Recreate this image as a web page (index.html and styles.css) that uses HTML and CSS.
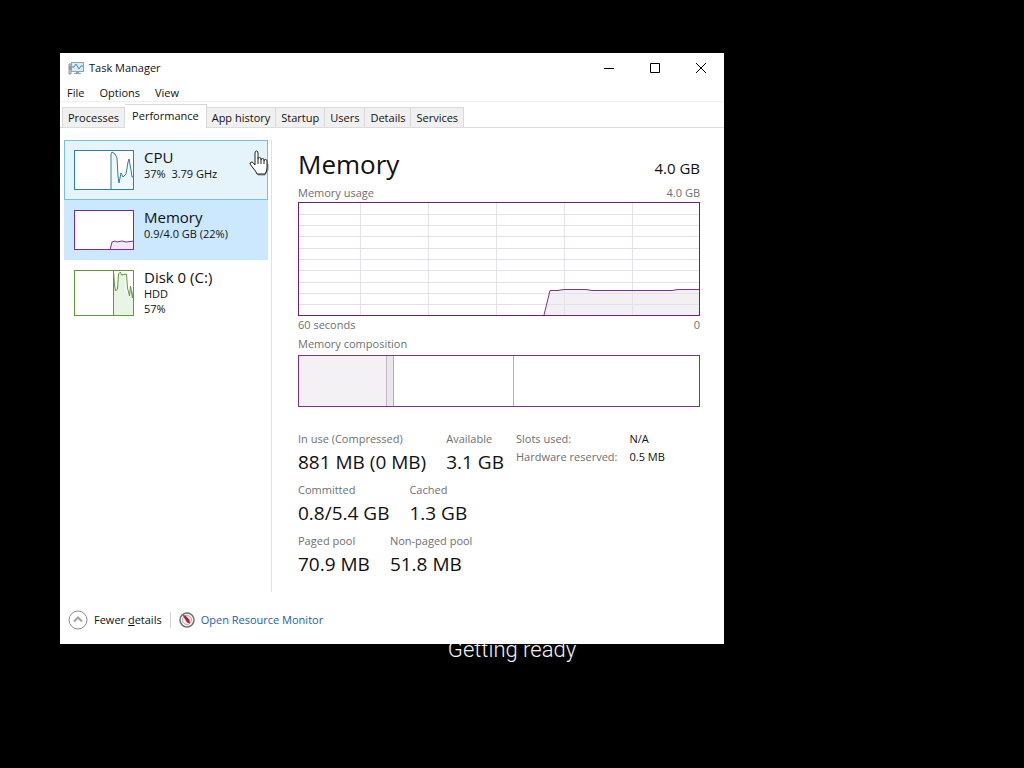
FILE: index.html
```html
<!DOCTYPE html>
<html lang="en">
  <head>
    <meta charset="UTF-8" />
    <meta name="viewport" content="width=device-width, initial-scale=1.0" />
    <title>Task Manager</title>
    <link rel="stylesheet" href="styles.css">
  </head>

  <body>
    <p class="boot">Getting ready</p>

    <div class="window">
      <header class="titlebar">
        <svg class="app-icon" width="17" height="16" viewBox="0 0 17 16">
          <path d="M1 4h2v10H1z" fill="#d5dad2" stroke="#8e9a92" />
          <path d="M1 7h2M1 9h2" stroke="#6f7d74" />
          <rect x="3.500" y="2.500" width="12" height="9" fill="#d8ecf6" stroke="#8fa5b2" />
          <path d="M4 7h2l2-3 3 5 2-3h2" fill="none" stroke="#4d8aa8" />
          <path d="M8 12h3v1h2v1H6v-1h2z" fill="#8ea1ab" />
        </svg>
        <h1>Task Manager</h1>
        <div class="controls">
          <button aria-label="Minimize"><svg width="12" height="12"><path d="M1 6.500h10" /></svg></button>
          <button aria-label="Maximize"><svg width="12" height="12"><path d="M1.500 1.500h9v9h-9z" /></svg></button>
          <button aria-label="Close"><svg width="12" height="12"><path d="M1 1l10 10M11 1L1 11" /></svg></button>
        </div>
      </header>

      <nav class="menu">
        <button>File</button>
        <button>Options</button>
        <button>View</button>
      </nav>

      <div class="tabs" role="tablist">
        <button role="tab">Processes</button>
        <button role="tab" class="active" aria-selected="true">Performance</button>
        <button role="tab">App history</button>
        <button role="tab">Startup</button>
        <button role="tab">Users</button>
        <button role="tab">Details</button>
        <button role="tab">Services</button>
      </div>

      <main class="content">
        <aside class="sidebar">
          <button class="item hover">
            <svg class="thumb cpu" width="60" height="40" viewBox="0 0 60 40">
              <path class="fill" d="M37 40V3l2-1 3 4 2 14 1 13 3-10 1 4 3-3 2-13 1-2 2 14 2 6 1 3v8z" />
              <path d="M37 40V4l1-2 3 2 2 4 1 18 1 7 2-10 2 4 3-3 2-12 1-3 2 11 1 7h2l1 5" />
              <rect x="0.500" y="0.500" width="59" height="39" />
            </svg>
            <span class="item-text">
              <span class="name">CPU</span>
              <span>37%&nbsp; 3.79 GHz</span>
            </span>
          </button>
          <button class="item selected">
            <svg class="thumb memory" width="60" height="40" viewBox="0 0 60 40">
              <path class="fill" d="M36 40l2-8h22v8z" />
              <path d="M36 40l2-8 3-1 2 1 5-1 4 1 8-1" />
              <rect x="0.500" y="0.500" width="59" height="39" />
            </svg>
            <span class="item-text">
              <span class="name">Memory</span>
              <span>0.9/4.0 GB (22%)</span>
            </span>
          </button>
          <button class="item">
            <svg class="thumb disk" width="60" height="46" viewBox="0 0 60 46">
              <path class="fill" d="M39 46V2l3 18 3-17 6 2 1 17 3 4 2-8 3 8v22z" />
              <path d="M39.500 46V1l1 14 1 6 2-2 1-15 2-2 1 3 5-1 1 14 2 8 1-10 2 12 1-8" />
              <rect x="0.500" y="0.500" width="59" height="45" />
            </svg>
            <span class="item-text">
              <span class="name">Disk 0 (C:)</span>
              <span>HDD</span>
              <span>57%</span>
            </span>
          </button>
        </aside>

        <section class="details">
          <div class="heading">
            <h2>Memory</h2>
            <span>4.0 GB</span>
          </div>

          <div class="caption"><span>Memory usage</span><span>4.0 GB</span></div>
          <svg class="usage" viewBox="0 0 400 112" preserveAspectRatio="none">
            <path class="area" d="M245 112l6-25 14-1h22l6 1h80l6-1h21v26z" />
            <path class="grid" d="M0 11.500h400M0 22.500h400M0 33.500h400M0 45.500h400M0 56.500h400M0 67.500h400M0 79.500h400M0 90.500h400M0 101.500h400" />
            <path class="grid" d="M61.500 0v112M129.500 0v112M197.500 0v112M265.500 0v112M333.500 0v112" />
            <path class="line" d="M245 112l6-24.500h8l6-1h22l6 1h80l6-1h22" />
          </svg>
          <div class="caption"><span>60 seconds</span><span>0</span></div>

          <div class="caption composition-title"><span>Memory composition</span></div>
          <div class="composition">
            <div class="in-use"></div>
            <div class="modified"></div>
            <div class="standby"></div>
            <div class="free"></div>
          </div>

          <div class="stats">
            <div class="figures">
              <dl>
                <div><dt>In use (Compressed)</dt><dd>881 MB (0 MB)</dd></div>
                <div><dt>Available</dt><dd>3.1 GB</dd></div>
              </dl>
              <dl>
                <div><dt>Committed</dt><dd>0.8/5.4 GB</dd></div>
                <div><dt>Cached</dt><dd>1.3 GB</dd></div>
              </dl>
              <dl>
                <div><dt>Paged pool</dt><dd>70.9 MB</dd></div>
                <div><dt>Non-paged pool</dt><dd>51.8 MB</dd></div>
              </dl>
            </div>
            <table class="hardware">
              <tr><th scope="row">Slots used:</th><td>N/A</td></tr>
              <tr><th scope="row">Hardware reserved:</th><td>0.5 MB</td></tr>
            </table>
          </div>
        </section>
      </main>

      <footer class="footer">
        <button class="fewer">
          <svg width="20" height="20" viewBox="0 0 20 20">
            <circle cx="10" cy="10" r="9" fill="#fff" stroke="#8c8c8c" />
            <path d="M6 11.500L10 7.500l4 4" fill="none" stroke="#a2a2a2" stroke-width="2" />
          </svg>
          <span>Fewer <u>d</u>etails</span>
        </button>
        <a href="#" class="monitor">
          <svg width="16" height="16" viewBox="0 0 16 16">
            <circle cx="8" cy="8" r="7" fill="#f1f1f1" stroke="#77706f" stroke-width="1.500" />
            <circle cx="8" cy="8" r="4.500" fill="none" stroke="#a9b4b2" />
            <path d="M3.500 3l3 .5 4 4.500.5 3.500-3-1z" fill="#c2182f" />
          </svg>
          Open Resource Monitor
        </a>
      </footer>
    </div>

    <svg class="pointer" width="20" height="26" viewBox="0 0 20 26">
      <path class="shadow" d="M17 13l2 1v6l-3 5H9l-1-2z" />
      <path d="M6 14V3q0-2 1.500-2T9 3v6q0-1.500 1.500-1.500T12 9v1q0-1.500 1.500-1.500T15 10v1q0-1.500 1.500-1.500T18 11v7q0 3-2 6H8q-1-3-4-6l-3-4q0-2 2-2 1 0 3 3z" />
      <path d="M9 9v5M12 10v4M15 11v3" />
    </svg>
  </body>
</html>
```
FILE: styles.css
```css
* {
  box-sizing: border-box;
  padding: 0;
  margin: 0;
}
body {
  background-color: black;
  min-height: 100vh;
  font-family: "Open Sans", "Noto Sans", sans-serif;
  font-size: 11px;
  line-height: 16px;
  color: #111;
}
button {
  font: inherit;
  color: inherit;
  background: none;
  border: none;
}
.boot {
  position: absolute;
  bottom: 104px;
  width: 100%;
  text-align: center;
  color: #f2f2f2;
  font-family: Roboto, sans-serif;
  font-size: 22px;
  font-weight: 300;
  line-height: 28px;
}
.window {
  position: absolute;
  top: 53px;
  left: 60px;
  right: 300px;
  bottom: 124px;
  background-color: white;
  display: flex;
  flex-direction: column;
}

/* title bar and menu */
.titlebar {
  display: flex;
  align-items: center;
  height: 30px;
  padding-left: 8px;
  gap: 4px;
}
.titlebar h1 {
  font-size: 11px;
  font-weight: normal;
}
.controls {
  display: flex;
  margin-left: auto;
}
.controls button {
  width: 46px;
  height: 30px;
}
.controls svg {
  display: block;
  margin: auto;
  fill: none;
  stroke: black;
}
.menu {
  display: flex;
  gap: 15px;
  height: 19px;
  padding: 2px 7px 0;
  border-bottom: 1px solid #f0f0f0;
}
.tabs {
  display: flex;
  align-items: flex-end;
  height: 26px;
  padding: 0 2px;
  border-bottom: 1px solid #dcdcdc;
}
.tabs button {
  height: 20px;
  padding: 0 5px;
  background-color: #f0f0f0;
  border: 1px solid #d9d9d9;
  border-left-width: 0;
  border-bottom: none;
}
.tabs button:first-child {
  border-left-width: 1px;
}
.tabs .active {
  height: 24px;
  margin-bottom: -1px;
  padding: 0 7px 2px;
  background-color: white;
}

/* resource list */
.content {
  flex: 1;
  display: flex;
  padding-top: 12px;
}
.sidebar {
  width: 212px;
  padding: 0 3px 0 4px;
  border-right: 1px solid #e0e0e0;
}
.item {
  display: flex;
  gap: 10px;
  width: 100%;
  height: 60px;
  padding: 9px;
  border: 1px solid transparent;
  text-align: left;
}
.item.hover {
  background-color: #e5f3fb;
  border-color: #70c0e7;
}
.item.selected {
  background-color: #cce8ff;
}
.item-text {
  display: flex;
  flex-direction: column;
  line-height: 15px;
}
.item-text .name {
  font-size: 15px;
  line-height: 14px;
  padding-bottom: 2px;
}
.thumb {
  flex: none;
  background-color: white;
}
.thumb path,
.thumb rect {
  fill: none;
}
.thumb .fill {
  stroke: none;
}
.cpu {
  stroke: #2f7f9f;
}
.thumb.cpu .fill {
  fill: #f1f8fc;
}
.memory {
  stroke: #7a2c93;
}
.thumb.memory .fill {
  fill: #f3e8f5;
}
.disk {
  stroke: #5f9a35;
}
.thumb.disk .fill {
  fill: #e8f4e4;
}

/* memory details */
.details {
  flex: 1;
  padding: 6px 24px 0 26px;
}
.heading {
  display: flex;
  justify-content: space-between;
  align-items: baseline;
  height: 39px;
  line-height: 36px;
  font-size: 15px;
}
.heading h2 {
  font-size: 26px;
  font-weight: normal;
}
.caption {
  display: flex;
  justify-content: space-between;
  color: #707070;
}
.usage {
  display: block;
  width: 100%;
  height: 114px;
  border: 1px solid #68217a;
  margin: 1px 0;
}
.usage path {
  fill: none;
  vector-effect: non-scaling-stroke;
}
.usage .area {
  fill: #f3f0f3;
}
.usage .grid {
  stroke: #e7dfe9;
}
.usage .line {
  stroke: #7c3292;
}
.composition-title {
  margin: 3px 0;
}
.composition {
  display: flex;
  height: 52px;
  border: 1px solid #7c3292;
}
.in-use {
  width: 22%;
  background-color: #f4f1f5;
  border-right: 1px solid #c4b4c8;
}
.modified {
  width: 7px;
  background-color: #ede6ef;
  border-right: 1px solid #b9a9bd;
}
.standby {
  width: 30%;
  border-right: 1px solid #b9a9bd;
}
.stats {
  display: flex;
  align-items: flex-start;
  gap: 12px;
  margin-top: 24px;
}
.figures dl {
  display: flex;
  gap: 20px;
  height: 51px;
}
.figures dt {
  color: #707070;
}
.figures dd {
  font-size: 19px;
  line-height: 30px;
}
.hardware {
  border-collapse: collapse;
}
.hardware th {
  padding-right: 12px;
  font-weight: normal;
  text-align: left;
  color: #707070;
}
.hardware th,
.hardware td {
  height: 18px;
  vertical-align: top;
  white-space: nowrap;
}

/* footer */
.footer {
  display: flex;
  align-items: center;
  height: 52px;
  padding: 4px 8px 0;
}
.fewer,
.monitor {
  display: flex;
  align-items: center;
  gap: 6px;
}
.fewer {
  padding-right: 8px;
}
.monitor {
  padding-left: 8px;
  border-left: 1px solid #d5d5d5;
  color: #1a5fb4;
  text-decoration: none;
}
.pointer {
  position: absolute;
  top: 150px;
  left: 249px;
  fill: white;
  stroke: #222;
}
.pointer .shadow {
  fill: #8a9299;
  stroke: #8a9299;
}
```
